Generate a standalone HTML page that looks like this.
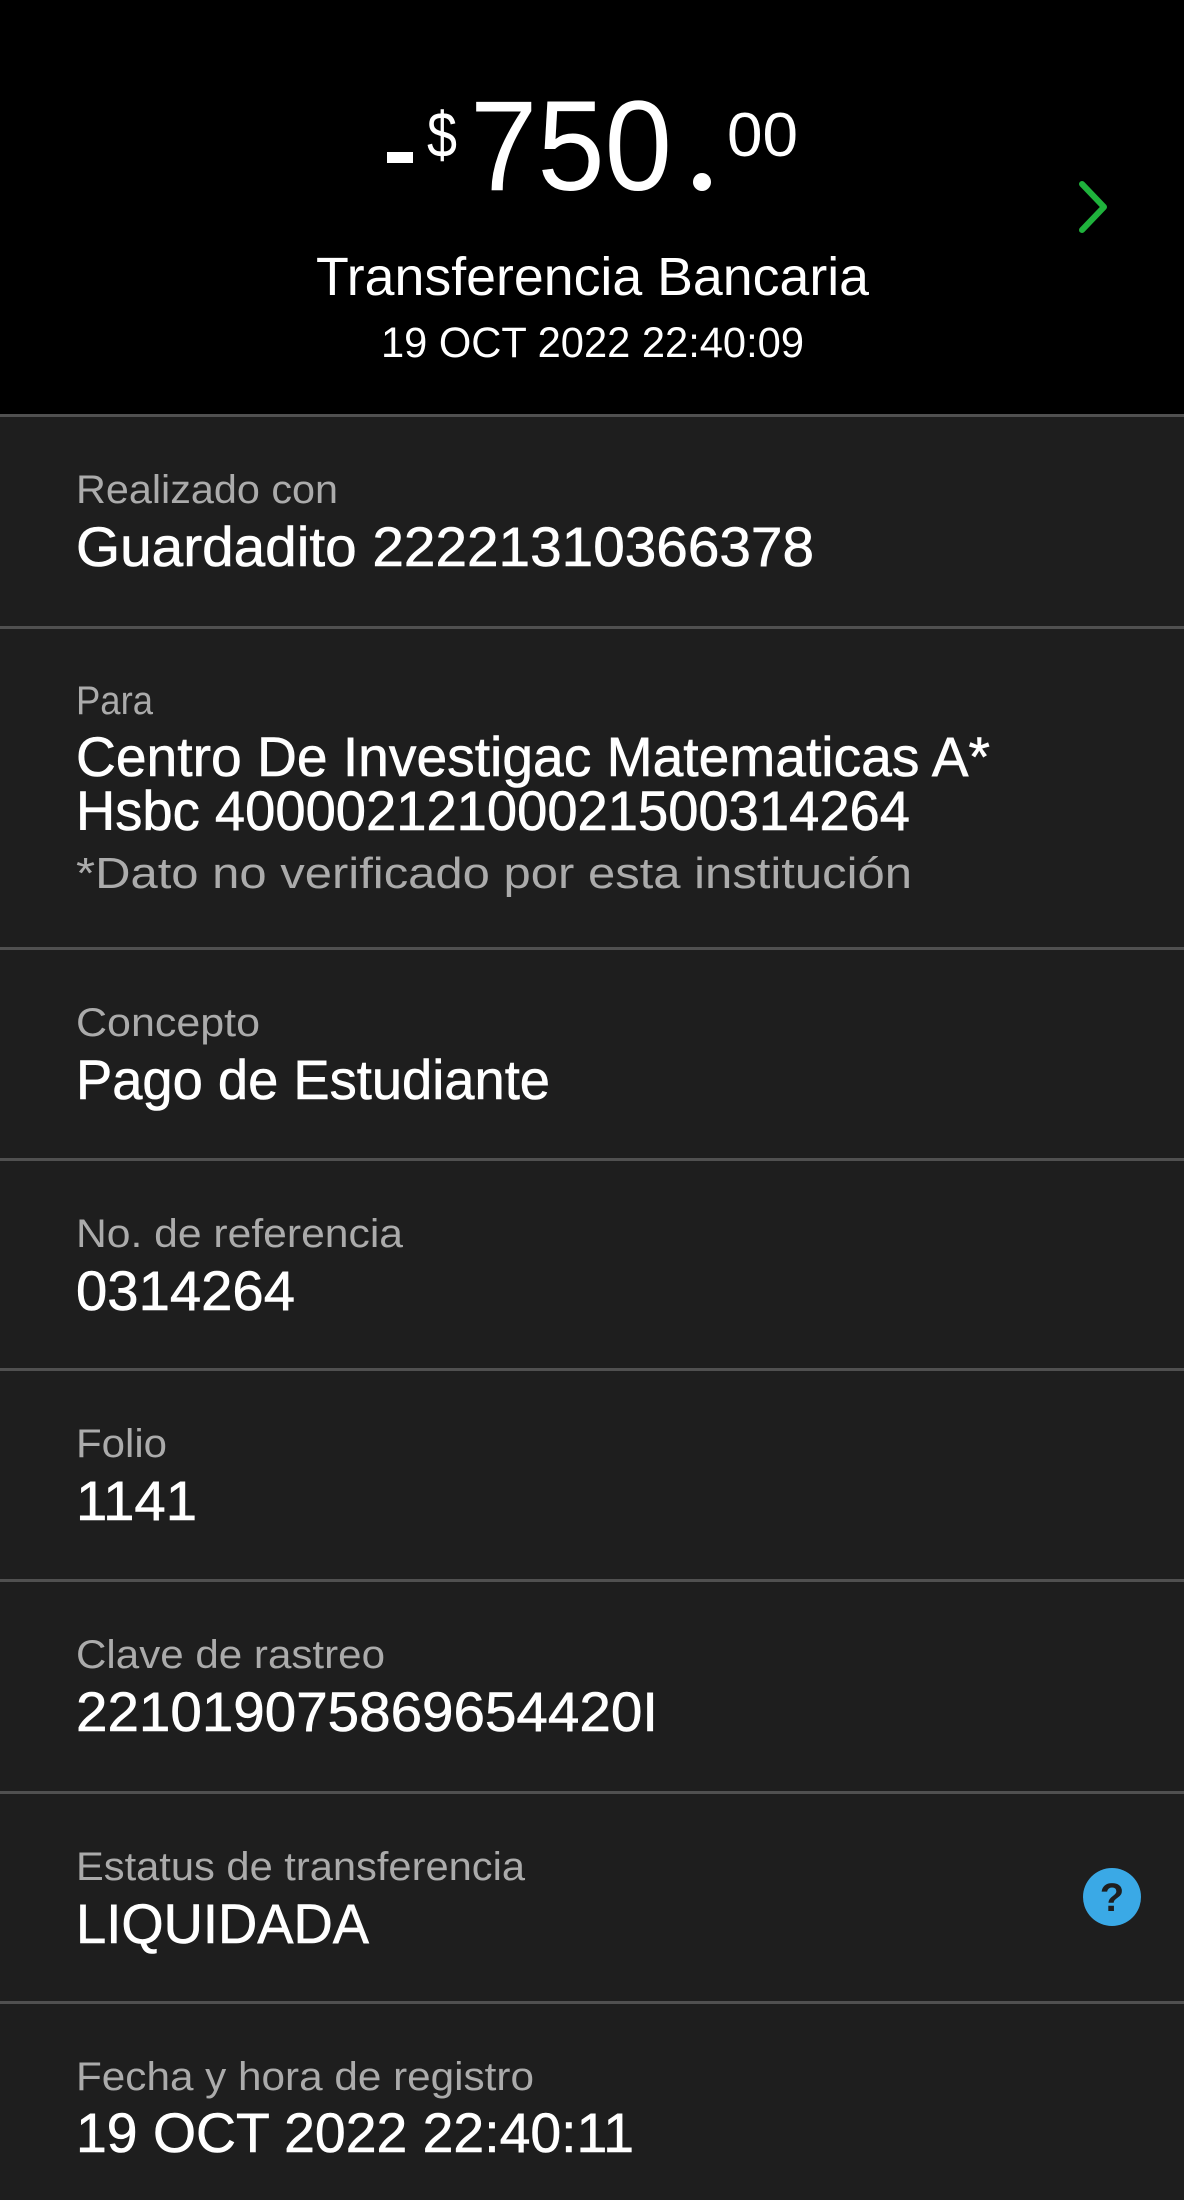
<!DOCTYPE html>
<html><head><meta charset="utf-8"><style>
html,body{margin:0;padding:0;background:#1e1e1e;}
svg{display:block}
text{font-family:"Liberation Sans",sans-serif;}
.l{fill:#ababab;font-size:40px}
.v{fill:#fff;font-size:56px;stroke:#fff;stroke-width:0.6px}
</style></head><body>
<svg width="1184" height="2200" viewBox="0 0 1184 2200" xmlns="http://www.w3.org/2000/svg">
<rect x="0" y="0" width="1184" height="2200" fill="#1e1e1e"/>
<rect x="0" y="0" width="1184" height="414" fill="#000"/>
<g fill="#505050">
<rect x="0" y="414" width="1184" height="3"/>
<rect x="0" y="626" width="1184" height="3"/>
<rect x="0" y="947" width="1184" height="3"/>
<rect x="0" y="1158" width="1184" height="3"/>
<rect x="0" y="1368" width="1184" height="3"/>
<rect x="0" y="1579" width="1184" height="3"/>
<rect x="0" y="1791" width="1184" height="3"/>
<rect x="0" y="2001" width="1184" height="3"/>
</g>
<!-- header -->
<rect x="387" y="152" width="26" height="11" fill="#fff"/>
<text x="427" y="157" fill="#fff" font-size="64" textLength="30" lengthAdjust="spacingAndGlyphs">$</text>
<text x="470" y="190" fill="#fff" font-size="128" textLength="202" lengthAdjust="spacingAndGlyphs">750</text>
<circle cx="702" cy="182" r="9" fill="#fff"/>
<text x="727" y="156" fill="#fff" font-size="62" textLength="71" lengthAdjust="spacingAndGlyphs">00</text>
<text x="316" y="295" fill="#fff" font-size="54" textLength="553" lengthAdjust="spacingAndGlyphs">Transferencia Bancaria</text>
<text x="381" y="357" fill="#fff" font-size="43" textLength="423" lengthAdjust="spacingAndGlyphs">19 OCT 2022 22:40:09</text>
<path d="M1082 184 L1104 207 L1082 230" fill="none" stroke="#1fb23c" stroke-width="6" stroke-linecap="round" stroke-linejoin="round"/>
<!-- rows -->
<text class="l" x="76" y="503" textLength="262" lengthAdjust="spacingAndGlyphs">Realizado con</text>
<text class="v" x="76" y="566" textLength="738" lengthAdjust="spacingAndGlyphs">Guardadito 22221310366378</text>

<text class="l" x="76" y="714" textLength="77" lengthAdjust="spacingAndGlyphs">Para</text>
<text class="v" x="76" y="776" textLength="914" lengthAdjust="spacingAndGlyphs">Centro De Investigac Matematicas A*</text>
<text class="v" x="76" y="830" textLength="834" lengthAdjust="spacingAndGlyphs">Hsbc 40000212100021500314264</text>
<text class="l" x="76" y="888" style="font-size:44px" textLength="836" lengthAdjust="spacingAndGlyphs">*Dato no verificado por esta institución</text>

<text class="l" x="76" y="1036" textLength="184" lengthAdjust="spacingAndGlyphs">Concepto</text>
<text class="v" x="76" y="1099" textLength="474" lengthAdjust="spacingAndGlyphs">Pago de Estudiante</text>

<text class="l" x="76" y="1247" textLength="327" lengthAdjust="spacingAndGlyphs">No. de referencia</text>
<text class="v" x="76" y="1310" textLength="219" lengthAdjust="spacingAndGlyphs">0314264</text>

<text class="l" x="76" y="1457" textLength="91" lengthAdjust="spacingAndGlyphs">Folio</text>
<text class="v" x="76" y="1520" textLength="121" lengthAdjust="spacingAndGlyphs">1141</text>

<text class="l" x="76" y="1668" textLength="309" lengthAdjust="spacingAndGlyphs">Clave de rastreo</text>
<text class="v" x="76" y="1731" textLength="582" lengthAdjust="spacingAndGlyphs">221019075869654420I</text>

<text class="l" x="76" y="1880" textLength="449" lengthAdjust="spacingAndGlyphs">Estatus de transferencia</text>
<text class="v" x="76" y="1943" textLength="293" lengthAdjust="spacingAndGlyphs">LIQUIDADA</text>
<circle cx="1112" cy="1897" r="29" fill="#3aa9e6"/>
<text x="1112" y="1911" fill="#1e1e1e" font-size="40" font-weight="bold" text-anchor="middle">?</text>

<text class="l" x="76" y="2090" textLength="458" lengthAdjust="spacingAndGlyphs">Fecha y hora de registro</text>
<text class="v" x="76" y="2152" textLength="558" lengthAdjust="spacingAndGlyphs">19 OCT 2022 22:40:11</text>
</svg>
</body></html>
